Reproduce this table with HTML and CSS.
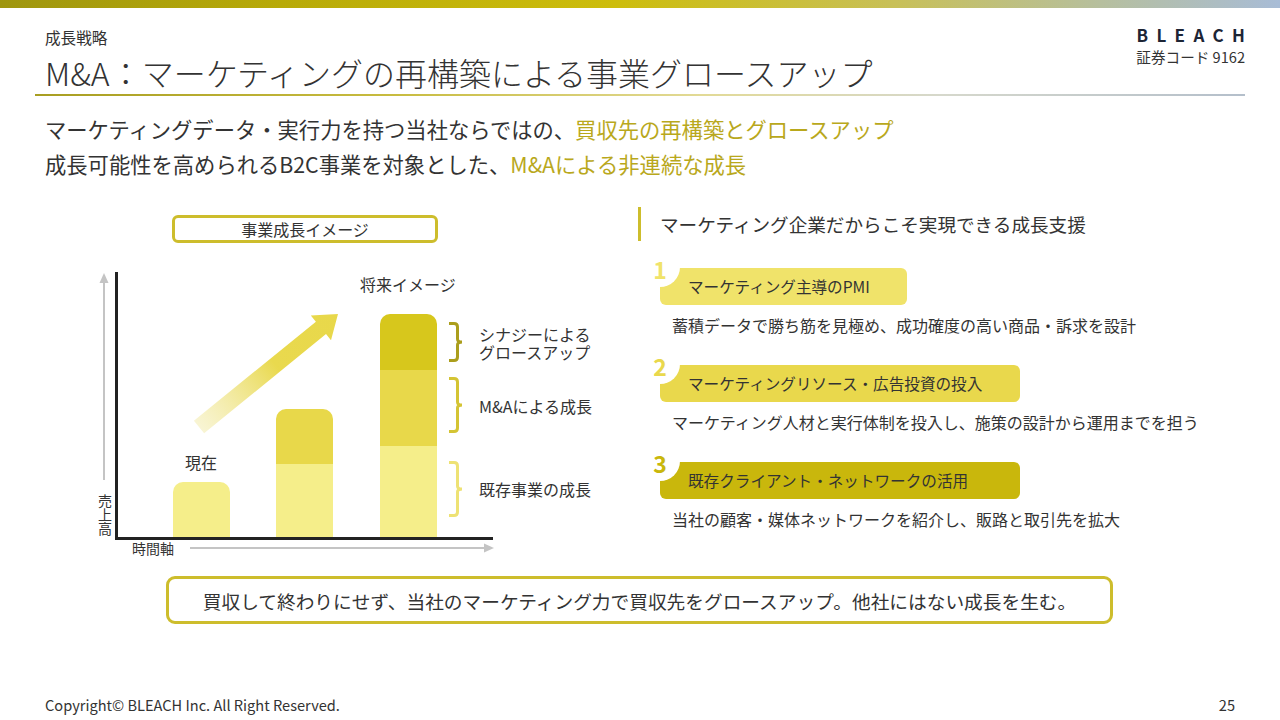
FILE: index.html
```html
<!DOCTYPE html>
<html lang="ja">
<head>
<meta charset="utf-8">
<title>M&amp;A：マーケティングの再構築による事業グロースアップ</title>
<link rel="stylesheet" href="styles.css">
</head>
<body>
<div class="slide">
  <div class="topbar"></div>
  <header class="header">
    <div class="titles">
      <div class="kicker">成長戦略</div>
      <h1 class="title">M&amp;A：マーケティングの再構築による事業グロースアップ</h1>
    </div>
    <div class="brand">
      <div class="logo">BLEACH</div>
      <div class="code">証券コード 9162</div>
    </div>
  </header>
  <div class="rule"></div>

  <div class="lead">
    <p>マーケティングデータ・実行力を持つ当社ならではの、<span class="hl">買収先の再構築とグロースアップ</span></p>
    <p>成長可能性を高められるB2C事業を対象とした、<span class="hl">M&amp;Aによる非連続な成長</span></p>
  </div>

  <div class="main">
    <div class="chart">
      <div class="chart-title">事業成長イメージ</div>

      <svg class="axis-up" width="12" height="210" viewBox="0 0 12 210">
        <line x1="6" y1="8" x2="6" y2="208" stroke="#c4c4c4" stroke-width="2"/>
        <polygon points="1.5,11 6,1 10.5,11" fill="#c4c4c4"/>
      </svg>
      <div class="y-label">売上高</div>
      <div class="y-axis"></div>
      <div class="x-axis"></div>
      <div class="x-label">時間軸</div>
      <svg class="axis-right" width="306" height="12" viewBox="0 0 306 12">
        <line x1="0" y1="6" x2="296" y2="6" stroke="#c4c4c4" stroke-width="2"/>
        <polygon points="294,1.5 304,6 294,10.5" fill="#c4c4c4"/>
      </svg>

      <svg class="grow-arrow" width="170" height="150" viewBox="0 0 170 150">
        <defs>
          <linearGradient id="ag" gradientUnits="userSpaceOnUse" x1="19" y1="125" x2="158" y2="12">
            <stop offset="0" stop-color="#f3ecb0" stop-opacity="0.55"/>
            <stop offset="0.55" stop-color="#e9d94e"/>
            <stop offset="1" stop-color="#e8d84a"/>
          </linearGradient>
        </defs>
        <polygon points="13.9,118.8 135.9,19.7 130.8,13.5 158,12 151,38.3 146,32.1 24.1,131.2" fill="url(#ag)"/>
      </svg>

      <div class="bar bar-now"><div class="seg seg-base" style="height:55px"></div></div>
      <div class="bar bar-mid">
        <div class="seg seg-ma" style="height:55px"></div>
        <div class="seg seg-base" style="height:73px"></div>
      </div>
      <div class="bar bar-future">
        <div class="seg seg-syn" style="height:56px"></div>
        <div class="seg seg-ma" style="height:76px"></div>
        <div class="seg seg-base" style="height:91px"></div>
      </div>

      <div class="lbl lbl-now">現在</div>
      <div class="lbl lbl-future">将来イメージ</div>

      <svg class="brace brace-1" width="16" height="40" viewBox="0 0 16 40">
        <path d="M0 1.5 H5 Q8.5 1.5 8.5 5 V17 Q8.5 20 13 20 Q8.5 20 8.5 23 V35 Q8.5 38.5 5 38.5 H0" fill="none" stroke="#ab9e1c" stroke-width="3"/>
      </svg>
      <svg class="brace brace-2" width="16" height="56" viewBox="0 0 16 56">
        <path d="M0 1.5 H5 Q8.5 1.5 8.5 5 V25 Q8.5 28 13 28 Q8.5 28 8.5 31 V51 Q8.5 54.5 5 54.5 H0" fill="none" stroke="#d4c434" stroke-width="3"/>
      </svg>
      <svg class="brace brace-3" width="16" height="56" viewBox="0 0 16 56">
        <path d="M0 1.5 H5 Q8.5 1.5 8.5 5 V25 Q8.5 28 13 28 Q8.5 28 8.5 31 V51 Q8.5 54.5 5 54.5 H0" fill="none" stroke="#eee274" stroke-width="3"/>
      </svg>

      <div class="blbl blbl-1"><span class="bline">シナジーによる</span><span class="bline">グロースアップ</span></div>
      <div class="blbl blbl-2">M&amp;Aによる成長</div>
      <div class="blbl blbl-3">既存事業の成長</div>
    </div>

    <div class="support">
      <div class="support-head">マーケティング企業だからこそ実現できる成長支援</div>
      <div class="item item-1">
        <div class="pill pill-short"><span class="num">1</span>マーケティング主導のPMI</div>
        <p class="desc">蓄積データで勝ち筋を見極め、成功確度の高い商品・訴求を設計</p>
      </div>
      <div class="item item-2">
        <div class="pill"><span class="num">2</span>マーケティングリソース・広告投資の投入</div>
        <p class="desc">マーケティング人材と実行体制を投入し、施策の設計から運用までを担う</p>
      </div>
      <div class="item item-3">
        <div class="pill"><span class="num">3</span>既存クライアント・ネットワークの活用</div>
        <p class="desc">当社の顧客・媒体ネットワークを紹介し、販路と取引先を拡大</p>
      </div>
    </div>
  </div>

  <div class="summary">買収して終わりにせず、当社のマーケティング力で買収先をグロースアップ。他社にはない成長を生む。</div>

  <footer class="footer">
    <span>Copyright© BLEACH Inc. All Right Reserved.</span>
    <span>25</span>
  </footer>
</div>
</body>
</html>
```

FILE: styles.css
```css
* { box-sizing: border-box; }

html, body {
  margin: 0;
  padding: 0;
  background: #ffffff;
}

body {
  font-family: "Noto Sans CJK JP", "Noto Sans", sans-serif;
  color: #333333;
}

.slide {
  width: 1280px;
  height: 720px;
  overflow: hidden;
  position: relative;
  background: #ffffff;
}

.topbar {
  height: 8px;
  background: linear-gradient(90deg, #9f960f 0%, #b8aa08 22%, #cdbd0c 48%, #c8c058 70%, #b6bf9e 86%, #a8bcd6 100%);
}

.header {
  display: flex;
  justify-content: space-between;
  align-items: flex-start;
  padding: 0 35px 0 45px;
}

.titles {
  padding-top: 19px;
}

.kicker {
  font-size: 15.6px;
  line-height: 20px;
  color: #333333;
}

.title {
  margin: 5px 0 0 0;
  font-size: 32px;
  line-height: 40px;
  font-weight: 300;
  color: #333333;
  letter-spacing: 0;
}

.brand {
  padding-top: 17px;
  text-align: right;
}

.logo {
  font-size: 17px;
  line-height: 20px;
  font-weight: 700;
  letter-spacing: 8.4px;
  margin-right: -8.4px;
  color: #1d2535;
}

.code {
  margin-top: 3px;
  font-size: 14.6px;
  line-height: 18px;
  color: #333333;
}

.rule {
  margin: 2px 35px 0 35px;
  height: 2px;
  background: linear-gradient(90deg, #a89e22 0%, #c8bc40 30%, #e2da96 55%, #d6d8cc 75%, #b4bfcb 100%);
}

.lead {
  margin-top: 15px;
  padding-left: 45px;
}

.lead p {
  margin: 0;
  font-size: 21.3px;
  line-height: 35px;
  color: #333333;
}

.hl {
  color: #b9a81c;
}

.main {
  display: flex;
  margin-top: 26px;
  height: 360px;
}

/* ---------- chart (diagram canvas) ---------- */
.chart {
  position: relative;
  width: 638px;
  flex: none;
  height: 360px;
}

.chart-title {
  position: absolute;
  left: 172px;
  top: 8px;
  width: 266px;
  height: 28px;
  border: 3px solid #cdbd2c;
  border-radius: 6px;
  font-size: 16px;
  line-height: 22px;
  text-align: center;
  color: #333333;
}

.axis-up {
  position: absolute;
  left: 98px;
  top: 65px;
}

.y-label {
  position: absolute;
  left: 97px;
  top: 287px;
  writing-mode: vertical-rl;
  font-size: 14px;
  line-height: 15px;
  letter-spacing: 0;
  color: #333333;
}

.y-axis {
  position: absolute;
  left: 115px;
  top: 65px;
  width: 3px;
  height: 268px;
  background: #222222;
}

.x-axis {
  position: absolute;
  left: 115px;
  top: 330px;
  width: 378px;
  height: 3px;
  background: #222222;
}

.x-label {
  position: absolute;
  left: 132px;
  top: 333px;
  font-size: 14px;
  line-height: 16px;
  color: #333333;
}

.axis-right {
  position: absolute;
  left: 190px;
  top: 335px;
}

.grow-arrow {
  position: absolute;
  left: 180px;
  top: 95px;
}

.bar {
  position: absolute;
  width: 57px;
  bottom: 30px;
  display: flex;
  flex-direction: column;
  border-radius: 10px 10px 0 0;
  overflow: hidden;
}

.bar-now { left: 173px; }
.bar-mid { left: 276px; }
.bar-future { left: 380px; }

.seg-base { background: #f5ee8a; }
.seg-ma { background: #e8d84a; }
.seg-syn { background: #d7c71c; }

.lbl {
  position: absolute;
  font-size: 16px;
  line-height: 20px;
  color: #333333;
}

.lbl-now { left: 185px; top: 245px; }
.lbl-future { left: 360px; top: 67px; }

.brace {
  position: absolute;
  left: 449px;
}

.brace-1 { top: 115px; }
.brace-2 { top: 170px; }
.brace-3 { top: 254px; }

.blbl {
  position: absolute;
  left: 479px;
  font-size: 16px;
  line-height: 18px;
  color: #333333;
}

.blbl-1 {
  top: 118px;
  display: flex;
  flex-direction: column;
}

.bline {
  display: block;
  height: 18px;
  line-height: 18px;
}

.blbl-2 { top: 190px; }
.blbl-3 { top: 273px; }

/* ---------- support column ---------- */
.support {
  display: flex;
  flex-direction: column;
}

.support-head {
  height: 34px;
  border-left: 3px solid #cdbd2c;
  padding-left: 19px;
  font-size: 18.6px;
  line-height: 34px;
  color: #333333;
}

.item {
  margin-left: 22px;
  margin-top: 28px;
}

.item-1 { margin-top: 27px; }

.pill {
  position: relative;
  width: 360px;
  height: 37px;
  border-radius: 6px;
  padding-left: 28px;
  font-size: 15.6px;
  line-height: 37px;
  color: #333333;
}

.pill-short { width: 247px; }

.item-1 .pill { background: #f0e36a; }
.item-2 .pill { background: #e9d84c; }
.item-3 .pill { background: #c9b70c; }

.num {
  position: absolute;
  left: -20px;
  top: -21px;
  width: 40px;
  height: 40px;
  border-radius: 50%;
  background: #ffffff;
  display: flex;
  align-items: center;
  justify-content: center;
  padding-top: 4px;
  font-size: 23px;
  font-weight: 700;
  line-height: 1;
}

.item-1 .num { color: #f0e36a; }
.item-2 .num { color: #e9d84c; }
.item-3 .num { color: #c9b70c; }

.desc {
  margin: 8px 0 0 12px;
  font-size: 16px;
  line-height: 24px;
  color: #333333;
  white-space: nowrap;
}

/* ---------- summary ---------- */
.summary {
  margin: 9px 0 0 166px;
  width: 947px;
  height: 48px;
  border: 3px solid #cdbd2c;
  border-radius: 9px;
  display: flex;
  align-items: center;
  justify-content: center;
  font-size: 18.7px;
  color: #333333;
}

.footer {
  margin-top: 71px;
  display: flex;
  justify-content: space-between;
  padding: 0 45px 0 45px;
  font-size: 14.6px;
  line-height: 20px;
  color: #333333;
}
```
